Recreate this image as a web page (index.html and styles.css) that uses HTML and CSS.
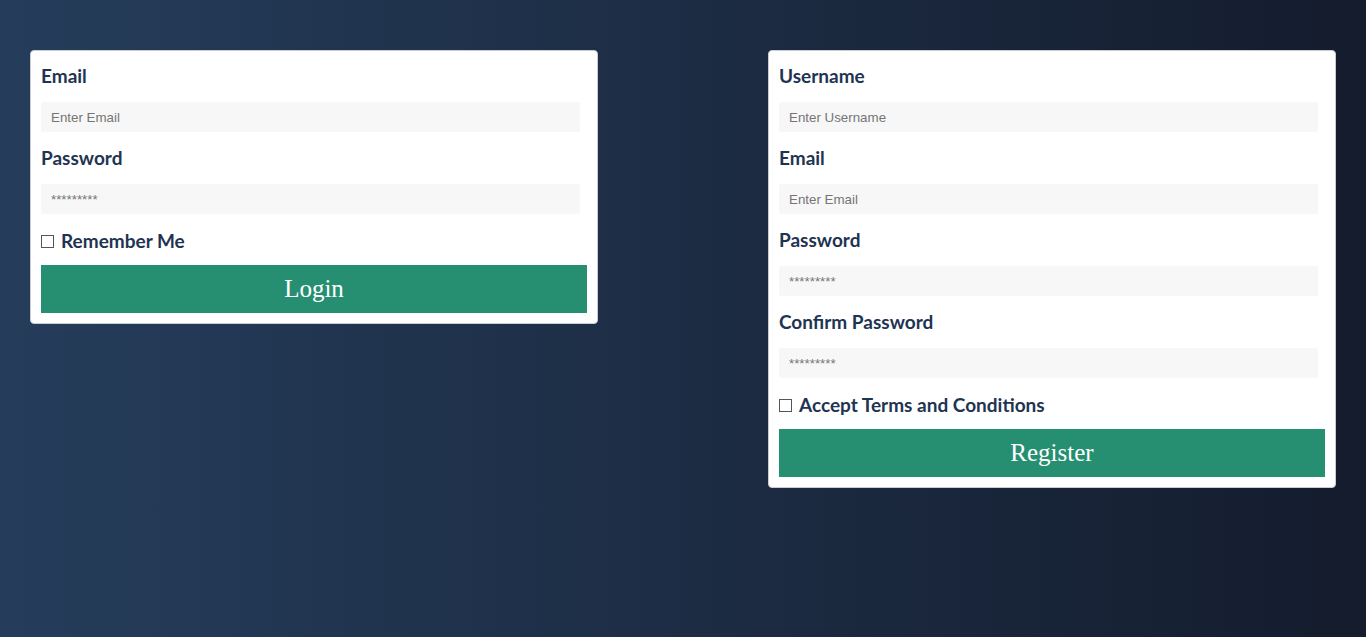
FILE: index.html
```html
<!DOCTYPE html>
<html lang="en">
<head>
  <meta charset="UTF-8" />
  <meta name="viewport" content="width=device-width, initial-scale=1.0" />
  <title>Login and Register</title>
  <link rel="stylesheet" href="styles.css">
</head>
<body>

  <div class="forms">
    <!-- Login Form -->
    <form class="card">
      <label class="field-label" for="login-email">Email</label>
      <input class="field" type="email" id="login-email" placeholder="Enter Email">
      <label class="field-label" for="login-pass">Password</label>
      <input class="field" type="password" id="login-pass" placeholder="*********">
      <label class="check-row">
        <input type="checkbox"> Remember Me
      </label>
      <button type="button" class="btn">Login</button>
    </form>

    <!-- Register Form -->
    <form class="card">
      <label class="field-label" for="reg-user">Username</label>
      <input class="field" type="text" id="reg-user" placeholder="Enter Username">
      <label class="field-label" for="reg-email">Email</label>
      <input class="field" type="email" id="reg-email" placeholder="Enter Email">
      <label class="field-label" for="reg-pass">Password</label>
      <input class="field" type="password" id="reg-pass" placeholder="*********">
      <label class="field-label" for="reg-confirm">Confirm Password</label>
      <input class="field" type="password" id="reg-confirm" placeholder="*********">
      <label class="check-row">
        <input type="checkbox"> Accept Terms and Conditions
      </label>
      <button type="button" class="btn">Register</button>
    </form>
  </div>

</body>
</html>
```

FILE: styles.css
```css
/* Page */
body {
  margin: 0;
  min-height: 100vh;
  background: linear-gradient(to right, #253d5b, #141c2d);
  font-family: Lato, "Open Sans", sans-serif;
}
/* Two forms side by side */
.forms {
  display: flex;
  justify-content: space-between;
  align-items: flex-start;
  padding: 50px 30px 0;
}
/* Form Card */
.card {
  width: 568px;
  box-sizing: border-box;
  background: #ffffff;
  border: 1px solid #c9ccd1;
  border-radius: 4px;
  padding: 9px 10px 10px;
  display: flex;
  flex-direction: column;
  align-items: flex-start;
}
.field-label {
  display: block;
  color: #1e3452;
  font-size: 19px;
  font-weight: 700;
  line-height: 32px;
  margin-bottom: 10px;
}
.field {
  width: 539px;
  height: 30px;
  box-sizing: border-box;
  border: none;
  border-radius: 2px;
  background: #f7f7f7;
  padding: 0 10px;
  margin: 0 0 10px;
  font-family: "Liberation Sans", Arial, sans-serif;
  font-size: 13.33px;
  color: #333;
}
.field::placeholder {
  color: #757575;
}
/* Checkbox Row */
.check-row {
  display: flex;
  align-items: center;
  gap: 7px;
  color: #1e3452;
  font-size: 19px;
  font-weight: 700;
  line-height: 31px;
  padding-top: 1px;
  margin: 0 0 9px;
}
.check-row input {
  appearance: none;
  margin: 1px 0 0;
  width: 13px;
  height: 13px;
  box-sizing: border-box;
  border: 1px solid #555;
  background: #fff;
}
/* Submit Button */
.btn {
  width: 100%;
  height: 48px;
  border: none;
  background-color: #278f71;
  color: #ffffff;
  font-family: "Liberation Serif", "Times New Roman", serif;
  font-size: 25px;
  cursor: pointer;
}
```
